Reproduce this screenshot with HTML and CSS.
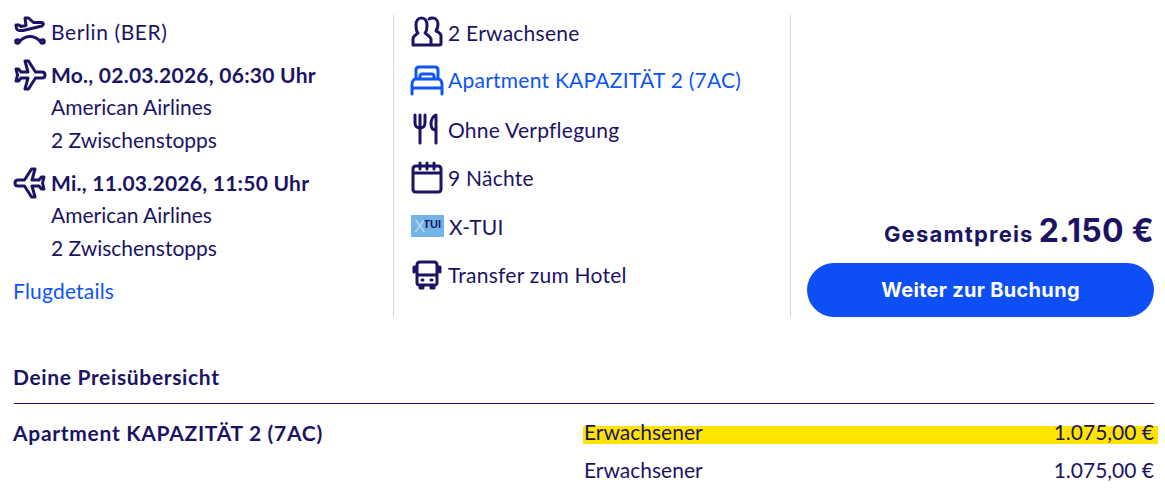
FILE: index.html
```html
<!DOCTYPE html>
<html lang="de">
<head>
<meta charset="utf-8">
<title>Angebot</title>
<link rel="stylesheet" href="styles.css">
</head>
<body>
<main class="page">
  <section class="summary">
    <div class="col col-flight">
      <div class="row row-dest">
        <svg class="ico" viewBox="0 0 32 32"><path class="s" d="M11 2h3.500l5 4.500h7.500c2 0 3 1 2 2.500l-1 1-19 4.500H5c-1 0-2-1-2.500-2L2 9h3l2 1.500 5-1z"/><path class="s" d="M6 25c3-3 6-4.500 10-4.500s7 1.500 10 4.500"/><circle class="s" cx="3.500" cy="25.500" r="1.800"/><circle class="s" cx="28.500" cy="25.500" r="1.800"/></svg>
        <span class="t-dest">Berlin (BER)</span>
      </div>
      <div class="flight">
        <svg class="ico" viewBox="0 0 32 32"><path class="s" d="M11 2h3.500l7 11H28c2 0 3 1 3 3s-1 3-3 3h-6.500l-7 11H11l3-11H7l-2.500 3H2l1.500-6L2 10h2.500L7 13h7z"/></svg>
        <div><div class="strong">Mo., 02.03.2026, 06:30 Uhr</div><div class="line">American Airlines</div><div class="line">2 Zwischenstopps</div></div>
      </div>
      <div class="flight">
        <svg class="ico" viewBox="0 0 32 32"><path class="s" d="M21 2h-3.500l-7 11H4c-2 0-3 1-3 3s1 3 3 3h6.500l7 11H21l-3-11h7l2.500 3H30l-1.500-6L30 10h-2.500L25 13h-7z"/></svg>
        <div><div class="strong">Mi., 11.03.2026, 11:50 Uhr</div><div class="line">American Airlines</div><div class="line">2 Zwischenstopps</div></div>
      </div>
      <a class="link details" href="#">Flugdetails</a>
    </div>
    <div class="col col-hotel">
      <div class="item">
        <svg class="ico" viewBox="0 0 32 32"><path class="s" d="M2 29v-6c0-3 3-4 5-6-2-2-2-5-2-8 0-4 2-7 5.500-7S16 5 16 9c0 3 0 6-2 8 2 2 5 3 6 6v6zM18 3c1-1 2-1 3.500-1C25 2 27 5 27 8c0 3-.5 5-2 7 2 1 5 2 5 5v8c0 1-1 1-2 1h-8"/></svg>
        <span>2 Erwachsene</span>
      </div>
      <div class="item blue">
        <svg class="ico" viewBox="0 0 32 32"><path class="s" d="M5 15V6c0-2 1-3 3-3h16c2 0 3 1 3 3v9M9 15v-3c0-1 1-2 2-2h10c1 0 2 1 2 2v3M1 21c0-4 2-6 4-6h22c2 0 4 2 4 6v9M1 30v-9M1 24h30"/></svg>
        <span>Apartment KAPAZITÄT 2 (7AC)</span>
      </div>
      <div class="item">
        <svg class="ico" viewBox="0 0 32 32"><path class="s" d="M4 2v8c0 3 2 5 5 5s5-2 5-5V2M9 2v28M25 30V2c-3 1-5 5-5 9 0 3 1 6 5 6"/></svg>
        <span>Ohne Verpflegung</span>
      </div>
      <div class="item">
        <svg class="ico" viewBox="0 0 32 32"><path class="s" d="M5 4h22c2 0 3 1 3 3v20c0 2-1 3-3 3H5c-2 0-3-1-3-3V7c0-2 1-3 3-3zM2 11h28M9 1v6M16 1v6M23 1v6"/></svg>
        <span>9 Nächte</span>
      </div>
      <div class="item">
        <div class="xtui"><span class="xtui-x">X</span><span class="xtui-t">TUI</span></div>
        <span>X-TUI</span>
      </div>
      <div class="item">
        <svg class="ico" viewBox="0 0 32 32"><path class="s" d="M9 3h14c2 0 3 1 3 3v18c0 1-1 2-2 2H8c-1 0-2-1-2-2V6c0-2 1-3 3-3zM6 16h20M6 8H3v5M26 8h3v5M9 26v3h3v-3M20 26v3h3v-3M11 21h1M20 21h1"/></svg>
        <span>Transfer zum Hotel</span>
      </div>
    </div>
    <div class="col col-price">
      <div class="total"><span class="total-label">Gesamtpreis</span> <span class="total-value">2.150 €</span></div>
      <a class="cta" href="#">Weiter zur Buchung</a>
    </div>
  </section>
  <section class="prices">
    <h2 class="prices-title">Deine Preisübersicht</h2>
    <div class="prices-body">
      <div class="room">Apartment KAPAZITÄT 2 (7AC)</div>
      <div class="lines">
        <div class="price-line highlight"><span>Erwachsener</span><span>1.075,00 €</span></div>
        <div class="price-line"><span>Erwachsener</span><span>1.075,00 €</span></div>
      </div>
    </div>
  </section>
</main>
</body>
</html>
```
FILE: styles.css
```css
* { box-sizing: border-box; }
html, body { margin: 0; padding: 0; background: #fff; overflow: hidden; }
body { font-family: "Lato", "Noto Sans", sans-serif; font-size: 21px; color: #1b1464; }
.page { padding: 15px 11px 0 14px; }
.summary { display: flex; height: 302px; }
.col { height: 302px; }
.col-flight { width: 380px; border-right: 1px solid #d9d9d9; display: flex; flex-direction: column; }
.col-hotel { width: 397px; border-right: 1px solid #d9d9d9; padding-left: 17px; letter-spacing: .25px; }
.col-price { flex: 1; padding-left: 16px; display: flex; flex-direction: column; justify-content: flex-end; align-items: stretch; }
.ico { width: 32px; height: 32px; flex: none; overflow: visible; }
.s { fill: none; stroke: currentColor; stroke-width: 3; stroke-linejoin: round; stroke-linecap: round; }
.row, .item { display: flex; align-items: center; gap: 5px; }
.row { height: 33px; }
.t-dest { letter-spacing: .6px; }
.flight { display: flex; gap: 5px; margin-top: 11px; }
.flight + .flight { margin-top: 11px; }
.strong { font-weight: 700; line-height: 32px; letter-spacing: .25px; }
.line { line-height: 32.500px; }
.details { margin-top: 11px; line-height: 32px; text-indent: -1px; letter-spacing: .2px; }
.link, .blue { color: #0d55f5; text-decoration: none; }
.item { height: 34px; margin-bottom: 14.600px; }
.blue { margin-top: -1px; margin-bottom: 15.600px; }
.xtui { width: 33px; height: 22px; flex: none; background: #72b4e8; border-radius: 1px; position: relative; display: flex; align-items: flex-start; justify-content: flex-end; padding: 2px 3px 0 0; font-family: "Liberation Sans", sans-serif; font-weight: 700; letter-spacing: 0; }
.xtui-x { position: absolute; left: 3px; bottom: 0; color: #b7d9f4; font-size: 17px; font-weight: 400; line-height: 20px; }
.xtui-t { color: #1b1464; font-size: 11px; line-height: 14px; }
.total { text-align: right; font-family: "Inter", sans-serif; font-weight: 700; margin-bottom: 13px; white-space: nowrap; }
.total-label { font-size: 22px; letter-spacing: 1.200px; }
.total-value { font-size: 32px; letter-spacing: .3px; }
.cta { display: flex; height: 54px; align-items: center; justify-content: center; background: #0d4ef5; color: #fff; border-radius: 27px; font-family: "Inter", sans-serif; font-weight: 700; font-size: 20px; letter-spacing: .3px; text-decoration: none; }
.prices { margin-top: 32px; }
.prices-title { margin: 0; font-size: 21px; font-weight: 700; letter-spacing: .65px; text-indent: -1px; line-height: 56px; height: 55px; border-bottom: 1px solid #1b1464; }
.prices-body { display: flex; padding-top: 12px; }
.room { width: 570px; font-weight: 700; letter-spacing: .7px; line-height: 34px; margin-left: -1px; }
.lines { flex: 1; margin-top: -3px; }
.price-line { display: flex; justify-content: space-between; padding: 0 0 0 1px; line-height: 38px; height: 38px; }
.highlight { background: linear-gradient(#ffe400, #ffe400) center 13px / 100% 18px no-repeat; margin-right: -4px; padding-right: 4px; }
```
